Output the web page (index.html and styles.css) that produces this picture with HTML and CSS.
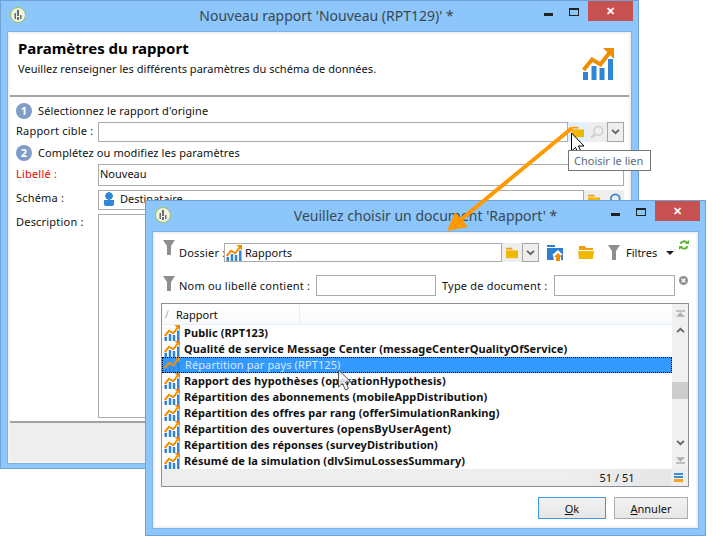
FILE: index.html
```html
<!DOCTYPE html>
<html lang="fr">
<head>
  <meta charset="UTF-8">
  <title>Nouveau rapport</title>
  <link rel="stylesheet" href="styles.css">
</head>
<body>
<svg class="defs" width="0" height="0">
  <symbol id="chart" viewBox="0 0 32 32">
    <path fill="#2f86d6" d="M1 24h5v8H1zM9.500 18h5v14h-5zM17.500 20h5v12h-5zM26 11h5v21h-5z"/>
    <path fill="none" stroke="#f08c00" stroke-width="4" d="M1.500 22 10 11.500l8.500 5L28 4"/>
    <path fill="#f08c00" d="M21 0h11v11z"/>
  </symbol>
  <symbol id="folder" viewBox="0 0 16 14">
    <path fill="#f39c12" d="M1 1h7l1 2H1z"/>
    <path fill="#f0b800" d="M1 4h14v9H1z"/>
  </symbol>
  <symbol id="funnel" viewBox="0 0 12 15">
    <path fill="#8e8e8e" d="M0 0h12L8 6v9H4V6z"/>
  </symbol>
  <symbol id="appicon" viewBox="0 0 16 16">
    <circle cx="8" cy="8" r="7.500" fill="#eef3e6" stroke="#9ac24c"/>
    <path fill="#6b6b6b" d="M7 3h2v6H7zM4.500 6H6v6H4.500zM10 8h1.500v4H10zM7 10h2v3H7z"/>
  </symbol>
  <symbol id="lens" viewBox="0 0 16 16">
    <circle cx="9.500" cy="6.500" r="5" fill="none" stroke="currentColor" stroke-width="2"/>
    <path stroke="currentColor" stroke-width="3" d="M6 10l-4.500 4.500"/>
  </symbol>
  <symbol id="chevron" viewBox="0 0 10 7">
    <path fill="none" stroke="currentColor" stroke-width="2.200" d="M1 1l4 4 4-4"/>
  </symbol>
</svg>

<!-- fenetre du rapport -->
<div class="win win-report">
  <div class="titlebar titlebar-shift">
    <svg class="app-icon"><use href="#appicon"/></svg>
    <div class="win-title">Nouveau rapport 'Nouveau (RPT129)' *</div>
    <div class="ctrl-min"></div>
    <div class="ctrl-max"></div>
    <div class="ctrl-close">✕</div>
  </div>
  <div class="win-body">
    <div class="win-content">
      <div class="report-head">
        <div>
          <h1>Paramètres du rapport</h1>
          <p>Veuillez renseigner les différents paramètres du schéma de données.</p>
        </div>
        <svg class="big-chart"><use href="#chart"/></svg>
      </div>
      <div class="report-form">
        <div class="step"><span class="step-num">1</span>Sélectionnez le rapport d'origine</div>
        <div class="field field-cible">
          <label>Rapport cible :</label>
          <div class="input grow"></div>
          <span class="tool tool-hover"><svg class="i-folder"><use href="#folder"/></svg></span>
          <span class="tool tool-off"><svg class="i-lens"><use href="#lens"/></svg></span>
          <span class="drop"><svg class="i-chev"><use href="#chevron"/></svg></span>
        </div>
        <div class="step"><span class="step-num">2</span>Complétez ou modifiez les paramètres</div>
        <div class="field field-libelle">
          <label class="required">Libellé :</label>
          <div class="input grow">Nouveau</div>
        </div>
        <div class="field field-schema">
          <label>Schéma :</label>
          <div class="input grow"><span class="person"></span>Destinataire</div>
          <span class="tool tool-plain"><svg class="i-folder"><use href="#folder"/></svg></span>
          <span class="tool tool-plain tool-blue"><svg class="i-lens"><use href="#lens"/></svg></span>
        </div>
        <div class="field field-desc">
          <label>Description :</label>
          <div class="input grow"></div>
        </div>
      </div>
      <div class="report-foot"></div>
    </div>
  </div>
</div>

<div class="tooltip">Choisir le lien</div>

<!-- fenetre de choix -->
<div class="win win-pick">
  <div class="titlebar">
    <svg class="app-icon"><use href="#appicon"/></svg>
    <div class="win-title">Veuillez choisir un document 'Rapport' *</div>
    <div class="ctrl-min"></div>
    <div class="ctrl-max"></div>
    <div class="ctrl-close">✕</div>
  </div>
  <div class="win-body">
    <div class="win-content pick-content">
      <div class="pick-row pick-row1">
        <svg class="i-funnel"><use href="#funnel"/></svg>
        <label>Dossier :</label>
        <div class="input pick-folder"><svg class="i-chart"><use href="#chart"/></svg>Rapports</div>
        <span class="tool tool-plain"><svg class="i-folder"><use href="#folder"/></svg></span>
        <span class="drop"><svg class="i-chev"><use href="#chevron"/></svg></span>
        <svg class="i-up" viewBox="0 0 16 16">
          <path fill="#2f7fd0" d="M0 0h8v2H0zM0 3h16v12H0z"/>
          <path fill="#fff" d="M7 16l-1-6H5l6-5 5 5h-2v6z"/>
          <path fill="#f08c00" d="M9 16v-4H7l4-4 4 4h-2v4z"/>
        </svg>
        <svg class="i-open" viewBox="0 0 16 13">
          <path fill="#f39c12" d="M1 0h6l1 2h7v2H1z"/>
          <path fill="#f0b800" d="M0 5h16l-1 8H1z"/>
        </svg>
        <svg class="i-funnel-b"><use href="#funnel"/></svg>
        <span class="filters">Filtres</span>
        <span class="caret"></span>
        <svg class="i-refresh" viewBox="0 0 10 10">
          <path fill="none" stroke="#5fb336" stroke-width="2" d="M1.500 4A3.600 3.600 0 0 1 8 3M8.500 6A3.600 3.600 0 0 1 2 7"/>
          <path fill="#5fb336" d="M6 4h4V0zM4 6H0v4z"/>
        </svg>
      </div>
      <div class="pick-row pick-row2">
        <svg class="i-funnel"><use href="#funnel"/></svg>
        <label>Nom ou libellé contient :</label>
        <div class="input input-name"></div>
        <label class="label-type">Type de document :</label>
        <div class="input input-type"></div>
        <svg class="i-clear" viewBox="0 0 10 10">
          <circle cx="5" cy="5" r="5" fill="#8f8f8f"/>
          <path stroke="#fff" stroke-width="1.500" d="M3 3l4 4M7 3l-4 4"/>
        </svg>
      </div>

      <div class="list">
        <div class="list-main">
          <div class="list-col">
            <div class="list-head">
              <span class="sort">∕</span>
              <span class="head-cell">Rapport</span>
              <span class="head-rest"></span>
            </div>
            <div class="row"><svg class="i-chart"><use href="#chart"/></svg>Public (RPT123)</div>
            <div class="row"><svg class="i-chart"><use href="#chart"/></svg>Qualité de service Message Center (messageCenterQualityOfService)</div>
            <div class="row row-sel"><svg class="i-chart"><use href="#chart"/></svg>Répartition par pays (RPT125)</div>
            <div class="row"><svg class="i-chart"><use href="#chart"/></svg>Rapport des hypothèses (operationHypothesis)</div>
            <div class="row"><svg class="i-chart"><use href="#chart"/></svg>Répartition des abonnements (mobileAppDistribution)</div>
            <div class="row"><svg class="i-chart"><use href="#chart"/></svg>Répartition des offres par rang (offerSimulationRanking)</div>
            <div class="row"><svg class="i-chart"><use href="#chart"/></svg>Répartition des ouvertures (opensByUserAgent)</div>
            <div class="row"><svg class="i-chart"><use href="#chart"/></svg>Répartition des réponses (surveyDistribution)</div>
            <div class="row"><svg class="i-chart"><use href="#chart"/></svg>Résumé de la simulation (dlvSimuLossesSummary)</div>
          </div>
          <div class="scrollbar">
            <div class="sb-btn sb-end">
              <svg viewBox="0 0 10 7" class="sb-i"><path fill="#b0b0b0" d="M0 0h10v1.500H0zM5 2l5 5H0z"/></svg>
            </div>
            <div class="sb-btn"><svg class="i-chev sb-up"><use href="#chevron"/></svg></div>
            <div class="sb-track"><div class="sb-thumb"></div></div>
            <div class="sb-btn"><svg class="i-chev"><use href="#chevron"/></svg></div>
            <div class="sb-btn sb-end">
              <svg viewBox="0 0 10 7" class="sb-i"><path fill="#b0b0b0" d="M0 5.500h10V7H0zM5 5L0 0h10z"/></svg>
            </div>
          </div>
        </div>
        <div class="list-foot">
          <div class="count">51 / 51</div>
          <div class="cols-btn"><i></i><i></i><i class="orange"></i></div>
        </div>
      </div>

      <div class="buttons">
        <button class="btn btn-default"><u>O</u>k</button>
        <button class="btn btn-cancel"><u>A</u>nnuler</button>
      </div>
    </div>
  </div>
</div>

<!-- fleche et curseurs par dessus les deux fenetres -->
<svg class="overlay" viewBox="0 0 723 556">
  <path stroke="#ff9900" stroke-width="4" fill="none" d="M572 128 458 222"/>
  <path fill="#ff9900" d="M447 231l8-19 13 15z"/>
  <path fill="#fff" stroke="#000" d="M571.500 133v18l4-3.500 3 6.500 3-1.500-3-6.500h5.500z"/>
  <path fill="#f2f6fb" fill-opacity=".85" stroke="#555" d="M338.500 370v17l4-3.500 3 6.500 3-1.500-3-6.500h5.500z"/>
</svg>
</body>
</html>
```
FILE: styles.css
```css
body, h1, p {
  margin: 0;
  padding: 0;
}

body {
  width: 723px;
  height: 556px;
  position: relative;
  overflow: hidden;
  background: #fff;
  font-family: "Noto Sans", "Open Sans", sans-serif;
  font-size: 11px;
  color: #111;
}

.defs {
  position: absolute;
}

/* windows */
.win {
  position: absolute;
  box-sizing: border-box;
  display: flex;
  flex-direction: column;
  background: #8cc6fa;
  border: 1px solid #6fa3d5;
}

.win-report {
  left: 0;
  top: 0;
  width: 639px;
  height: 469px;
}

.win-pick {
  left: 145px;
  top: 200px;
  width: 561px;
  height: 336px;
}

.titlebar {
  height: 30px;
  flex: none;
  display: flex;
  position: relative;
}

.app-icon {
  width: 16px;
  height: 16px;
  margin: 6px 0 0 9px;
  flex: none;
}

.win-title {
  position: absolute;
  left: 0;
  right: 0;
  top: 4px;
  text-align: center;
  font-size: 14px;
  line-height: 22px;
  color: #3b4652;
}

.titlebar-shift .win-title {
  left: 14px;
}

.ctrl-min {
  position: absolute;
  top: 12px;
  right: 85px;
  width: 9px;
  height: 3px;
  background: #222;
}

.ctrl-max {
  position: absolute;
  top: 7px;
  right: 59px;
  width: 8px;
  height: 5px;
  border: 1px solid #222;
  border-top-width: 2px;
}

.ctrl-close {
  position: absolute;
  top: 0;
  right: 5px;
  width: 45px;
  height: 20px;
  background: #c75050;
  color: #fff;
  text-align: center;
  font-size: 11px;
  font-weight: bold;
  line-height: 20px;
}

.win-body {
  flex: 1;
  display: flex;
  margin: 0 6px 6px;
  padding: 2px;
  background: #f2f2f2;
  border: 1px solid #7fb2e2;
}

.win-content {
  flex: 1;
  display: flex;
  flex-direction: column;
  background: #fff;
}

/* rapport */
.report-head {
  height: 61px;
  box-sizing: border-box;
  padding: 4px 15px 0 8px;
  display: flex;
  justify-content: space-between;
  border-bottom: 0;
}

.report-head h1 {
  font-size: 15px;
  line-height: 21px;
  color: #000;
}

.report-head p {
  margin-top: 1px;
  line-height: 18px;
  letter-spacing: .03px;
}

.big-chart {
  width: 32px;
  height: 32px;
  margin-top: 10px;
}

.report-form {
  flex: 1;
  border-top: 2px solid #a3a3a3;
  padding: 6px 5px 0 6px;
}

.step {
  height: 16px;
  display: flex;
  align-items: center;
  line-height: 16px;
  letter-spacing: .1px;
}

.step-num {
  width: 16px;
  height: 16px;
  border-radius: 50%;
  margin-right: 6px;
  background: #7f9dc9;
  color: #fff;
  font-weight: bold;
  font-size: 11px;
  text-align: center;
}

.field {
  display: flex;
  margin-top: 3px;
  margin-bottom: 3px;
}

.field label {
  width: 82px;
  flex: none;
  line-height: 18px;
  letter-spacing: .2px;
  white-space: nowrap;
}

.required {
  color: #f00000;
}

.field-cible, .field-schema {
  height: 20px;
}

.field-libelle {
  height: 22px;
}

.field-libelle label {
  line-height: 20px;
}

.field-libelle .input {
  padding-bottom: 2px;
}

.field-schema {
  margin-top: 4px;
  margin-bottom: 4px;
}

.field-schema label, .field-desc label {
  line-height: 16px;
}

.field-schema .input {
  padding-bottom: 2px;
}

.field-desc {
  height: 204px;
}

.input {
  box-sizing: border-box;
  border: 1px solid #ababab;
  background: #fff;
  display: flex;
  align-items: center;
  padding-left: 1px;
  line-height: 16px;
  white-space: nowrap;
}

.grow {
  flex: 1;
}

.field-desc .input {
  align-items: flex-start;
}

.person {
  width: 10px;
  height: 14px;
  margin: 0 6px 0 4px;
  background: radial-gradient(circle at 5px 4px, #2f86d6 3.500px, transparent 4px), linear-gradient(to bottom, transparent 8px, #2f86d6 8px);
  border-radius: 2px;
}

.tool {
  width: 20px;
  flex: none;
  display: flex;
  align-items: center;
  justify-content: center;
  align-self: stretch;
}

.tool-hover {
  background: #e3f0fb;
  width: 19px;
}

.tool-off {
  background: #eee;
  color: #d2d2d2;
}

.tool-plain {
  background: #eee;
  color: #2f86d6;
}

.i-folder {
  width: 14px;
  height: 12px;
}

.i-lens {
  width: 14px;
  height: 14px;
}

.drop {
  box-sizing: border-box;
  width: 17px;
  flex: none;
  display: flex;
  align-items: center;
  justify-content: center;
  align-self: stretch;
  background: #eee;
  border: 1px solid #a5a5a5;
  color: #555;
}

.i-chev {
  width: 9px;
  height: 6px;
  color: #666;
}

.report-foot {
  height: 38px;
  flex: none;
  background: #eee;
  border-top: 2px solid #a3a3a3;
}

/* choix */
.pick-content {
  padding: 0 7px 0 6px;
}

.pick-row {
  display: flex;
  align-items: center;
  position: relative;
}

.pick-row1 {
  height: 19px;
  margin-top: 9px;
  padding-left: 2px;
}

.pick-row2 {
  height: 21px;
  margin-top: 13px;
  padding-left: 2px;
}

.pick-row .input {
  align-self: stretch;
}

.i-funnel {
  width: 12px;
  height: 15px;
  flex: none;
  align-self: flex-start;
  margin-right: 4px;
}

.pick-row1 .i-funnel {
  margin-top: -3px;
}

.pick-row2 .i-funnel {
  margin-top: 1px;
}

.pick-row label {
  flex: none;
  letter-spacing: .2px;
  white-space: nowrap;
}

.pick-row1 label {
  width: 45px;
}

.pick-row2 label {
  width: 137px;
}

.pick-row2 .label-type {
  width: 112px;
  margin-left: 6px;
}

.pick-folder {
  width: 278px;
  flex: none;
}

.pick-folder .i-chart {
  margin-right: 3px;
}

.i-chart {
  width: 16px;
  height: 16px;
  flex: none;
}

.i-up {
  width: 16px;
  height: 16px;
  margin-left: 8px;
  flex: none;
}

.i-open {
  width: 16px;
  height: 13px;
  margin-left: 15px;
  flex: none;
}

.i-funnel-b {
  width: 12px;
  height: 15px;
  margin-left: 14px;
  flex: none;
}

.filters {
  margin-left: 6px;
  width: 40px;
}

.caret {
  width: 0;
  height: 0;
  border-left: 4px solid transparent;
  border-right: 4px solid transparent;
  border-top: 4px solid #222;
}

.i-refresh {
  width: 10px;
  height: 10px;
  margin-left: 5px;
  flex: none;
  align-self: flex-start;
  margin-top: -3px;
}

.input-name {
  width: 120px;
  flex: none;
}

.input-type {
  width: 121px;
  flex: none;
}

.i-clear {
  width: 9px;
  height: 9px;
  margin-left: 4px;
  flex: none;
  align-self: flex-start;
  margin-top: 1px;
}

.list {
  box-sizing: border-box;
  height: 184px;
  margin-top: 7px;
  display: flex;
  flex-direction: column;
  border: 1px solid #8b9097;
}

.list-main {
  flex: 1;
  display: flex;
  min-height: 0;
}

.list-col {
  flex: 1;
  min-width: 0;
  overflow: hidden;
}

.list-head {
  height: 21px;
  box-sizing: border-box;
  display: flex;
  align-items: center;
  border-bottom: 1px solid #e8eef5;
  background: linear-gradient(#fff, #f8f9fb);
}

.sort {
  width: 14px;
  padding-left: 3px;
  box-sizing: border-box;
  color: #999;
  font-size: 10px;
}

.head-cell {
  width: 123px;
  align-self: stretch;
  line-height: 21px;
  border-right: 1px solid #e8eef5;
}

.row {
  height: 16px;
  box-sizing: border-box;
  display: flex;
  align-items: center;
  padding-left: 2px;
  font-weight: bold;
  letter-spacing: .09px;
  line-height: 16px;
  white-space: nowrap;
  color: #111;
}

.row .i-chart {
  margin-right: 4px;
}

.row-sel {
  background: #3399ff;
  font-weight: normal;
  color: #d5e8fb;
  letter-spacing: .1px;
  outline: 1px dotted #000;
  outline-offset: -1px;
}

.row-sel .i-chart {
  margin-right: 5px;
}

.scrollbar {
  width: 16px;
  flex: none;
  display: flex;
  flex-direction: column;
  background: #f0f0f0;
}

.sb-btn {
  height: 16px;
  flex: none;
  display: flex;
  align-items: center;
  justify-content: center;
}

.sb-end {
  height: 18px;
}

.sb-up {
  transform: rotate(180deg);
}

.sb-i {
  width: 9px;
  height: 7px;
}

.sb-track {
  flex: 1;
  padding-top: 44px;
}

.sb-thumb {
  height: 17px;
  background: #cdcdcd;
}

.list-foot {
  height: 17px;
  flex: none;
  display: flex;
  background: #eee;
}

.count {
  margin-left: 401px;
  width: 108px;
  text-align: center;
  padding-left: 0;
  line-height: 17px;
  background: linear-gradient(to right, #eee, #e6e6e6);
}

.cols-btn {
  margin: 4px 0 0 3px;
}

.cols-btn i {
  display: block;
  width: 9px;
  height: 2px;
  margin-bottom: 1px;
  background: #3a8bd8;
}

.cols-btn .orange {
  height: 3px;
  background: #f5a623;
}

.buttons {
  display: flex;
  justify-content: flex-end;
  gap: 8px;
  margin: 10px 1px 0 0;
}

.btn {
  height: 22px;
  box-sizing: border-box;
  padding: 0;
  font: inherit;
  color: #111;
  background: linear-gradient(#f2f2f2, #e6e6e6);
  border: 1px solid #adadad;
}

.btn-default {
  width: 68px;
  border-color: #3c9ae8;
}

.btn-cancel {
  width: 74px;
}

/* over the windows */
.tooltip {
  position: absolute;
  left: 568px;
  top: 150px;
  box-sizing: border-box;
  width: 83px;
  height: 21px;
  padding-left: 5px;
  background: #fff;
  border: 1px solid #767676;
  color: #5b6b7d;
  line-height: 19px;
  white-space: nowrap;
  z-index: 1;
}

.overlay {
  position: absolute;
  left: 0;
  top: 0;
  width: 723px;
  height: 556px;
  pointer-events: none;
}
```
